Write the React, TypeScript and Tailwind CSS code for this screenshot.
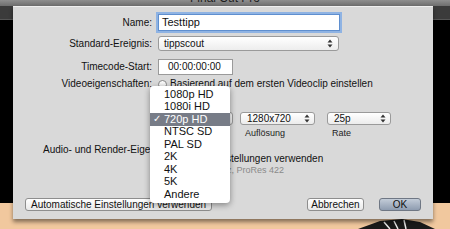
import React from 'react';

const font = { fontFamily: '"Liberation Sans", Arial, sans-serif' };

const Arrows: React.FC = () => (
  <svg className="w-[6px] h-[9px]" viewBox="0 0 6 9">
    <path d="M3 0.5 L5.5 3.5 H0.5 Z" fill="#333" />
    <path d="M3 8.5 L5.5 5.5 H0.5 Z" fill="#333" />
  </svg>
);

const Popup: React.FC<{ value: string; className: string }> = ({ value, className }) => (
  <div
    className={`h-[13px] flex items-center justify-between pl-[6px] pr-[4px] rounded-[3px] border border-[#9a9a9a] bg-gradient-to-b from-white to-[#ececec] text-[10px] text-[#111] leading-none ${className}`}
  >
    <span>{value}</span>
    <Arrows />
  </div>
);

const Radio: React.FC = () => (
  <span className="inline-block w-[9px] h-[9px] rounded-full border border-[#888] bg-gradient-to-b from-white to-[#e6e6e6] mr-[3px] shrink-0" />
);

const menuItems = ['1080p HD', '1080i HD', '720p HD', 'NTSC SD', 'PAL SD', '2K', '4K', '5K', 'Andere'];

export default function App() {
  return (
    <div className="relative w-[450px] h-[229px] overflow-hidden bg-black" style={font}>
      {/* window behind */}
      <div className="flex flex-col h-full">
        <div className="h-[6px] bg-gradient-to-b from-[#8e8e8e] to-[#6e6e6e] relative">
          <div className="absolute left-0 right-0 -top-[8px] text-center text-[12px] text-[#1e1e1e] leading-none">Final Cut Pro</div>
        </div>
        <div className="h-[14px] bg-[#3b3b3b] border-b border-[#555]" />
        <div className="flex-1 bg-black" />
        <div className="h-[26px] bg-[#f1c89e] relative">
          <svg className="absolute right-0 bottom-0" width="110" height="24" viewBox="0 0 110 24">
            <path d="M18 24 L40 16 L62 14 L80 17 L95 24 Z" fill="#1a1a1a" />
            <path d="M44 17 L50 24 M54 16 L58 24 M64 15 L66 24" stroke="#e8e8e8" strokeWidth="1.5" />
          </svg>
        </div>
      </div>

      {/* sheet dialog */}
      <div className="absolute left-[13px] top-[6px] w-[420px] h-[213px] bg-[#d9d9d9] border-t border-[#efefef] shadow-[0_3px_4px_rgba(0,0,0,0.45)] flex flex-col text-[10px] text-[#111] leading-none">
        <div className="grid grid-cols-[139px_1fr] gap-x-[6px] items-center pt-[7px]">
          <span className="text-right">Name:</span>
          <div className="w-[182px] h-[17px] bg-white border border-[#5f8fcf] ring-2 ring-[#8fb3e3] flex items-center pl-[3px] text-[11px]">
            Testtipp
          </div>

          <span className="text-right mt-[5px]">Standard-Ereignis:</span>
          <div className="mt-[5px] w-[181px] h-[15px] flex items-center justify-between pl-[5px] pr-[5px] rounded-[3px] border border-[#9a9a9a] bg-gradient-to-b from-white to-[#ededed] text-[10px]">
            <span>tippscout</span>
            <Arrows />
          </div>

          <span className="text-right mt-[8px]">Timecode-Start:</span>
          <div className="mt-[8px] w-[75px] h-[16px] bg-white border border-[#9a9a9a] flex items-center pl-[9px] text-[10px]">
            00:00:00:00
          </div>

          <span className="text-right mt-[4px]">Videoeigenschaften:</span>
          <div className="mt-[4px] flex items-center">
            <Radio />
            <span>Basierend auf dem ersten Videoclip einstellen</span>
          </div>
        </div>

        {/* custom video popups */}
        <div className="flex items-start mt-[23px] pl-[147px]">
          <Popup value="720p HD" className="w-[73px]" />
          <div className="ml-[7px] flex flex-col">
            <Popup value="1280x720" className="w-[75px]" />
            <span className="text-[9px] mt-[4px] pl-[5px] text-[#222]">Auflösung</span>
          </div>
          <div className="ml-[12px] flex flex-col">
            <Popup value="25p" className="w-[64px]" />
            <span className="text-[9px] mt-[4px] pl-[5px] text-[#222]">Rate</span>
          </div>
        </div>

        {/* audio / render */}
        <div className="flex flex-col mt-[7px]">
          <span className="pl-[30px] whitespace-nowrap">Audio- und Render-Eigenschaften:</span>
          <div className="flex items-center pl-[147px] -mt-[1px]">
            <Radio />
            <span>Standardeinstellungen verwenden</span>
          </div>
          <span className="text-[9px] text-[#8a8a8a] mt-[2px] pl-[159px]">Stereo, 48 kHz, ProRes 422</span>
        </div>

        <div className="mt-auto mb-[8px] flex items-center px-[12px]">
          <button className="h-[13px] px-[5px] rounded-[3px] border border-[#8e8e8e] bg-gradient-to-b from-white to-[#e9e9e9] text-[10px] leading-none">
            Automatische Einstellungen verwenden
          </button>
          <button className="ml-auto h-[13px] w-[57px] rounded-[3px] border border-[#8e8e8e] bg-gradient-to-b from-white to-[#e9e9e9] text-[10px] leading-none">
            Abbrechen
          </button>
          <button className="ml-[15px] h-[13px] w-[42px] rounded-[3px] border border-[#6f7784] bg-gradient-to-b from-[#c3ccd8] to-[#8e9cb0] text-[10px] leading-none">
            OK
          </button>
        </div>
      </div>

      {/* open popup menu */}
      <div className="absolute left-[150px] top-[86px] w-[80px] py-[2px] bg-white rounded-[4px] shadow-[0_2px_6px_rgba(0,0,0,0.4)] text-[11px] text-[#111]">
        {menuItems.map((item) => {
          const sel = item === '720p HD';
          return (
            <div
              key={item}
              className={`h-[12.5px] flex items-center leading-none ${sel ? 'bg-[#777c87] text-white' : ''}`}
            >
              <span className="w-[14px] pl-[3px] text-[10px]">{sel ? '✓' : ''}</span>
              <span>{item}</span>
            </div>
          );
        })}
      </div>
    </div>
  );
}
